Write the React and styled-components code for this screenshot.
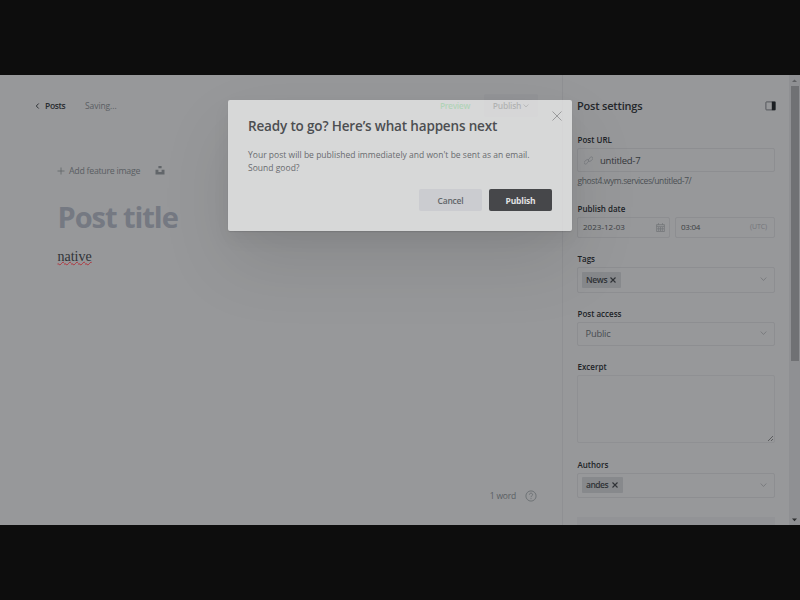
import React from "react";
import styled, { createGlobalStyle } from "styled-components";

const Global = createGlobalStyle`
  * { box-sizing: border-box; }
  body { margin: 0; background: #0d0d0d; }
`;

const Stage = styled.div`
  width: 800px;
  height: 600px;
  padding: 75px 0;
  background: #0d0d0d;
  font-family: "Open Sans", "Noto Sans", sans-serif;
  overflow: hidden;
`;

const AppFrame = styled.div`
  position: relative;
  display: grid;
  grid-template-columns: 562px 227px 11px;
  height: 450px;
  background: #97989a;
  overflow: hidden;
`;

const Label = styled.span`
  font-size: ${(p) => p.$size || 9}px;
  font-weight: ${(p) => p.$weight || 400};
  letter-spacing: ${(p) => p.$track || 0}px;
  color: ${(p) => p.$color || "#5a5e63"};
  line-height: 14px;
  white-space: nowrap;
`;

const Editor = styled.main`
  display: flex;
  flex-direction: column;
`;

const TopBar = styled.header`
  display: flex;
  align-items: center;
  height: 61px;
  padding: 0 24px 0 35px;
`;

const BackLink = styled.div`
  display: flex;
  align-items: center;
  gap: 5px;
  width: 50px;
`;

const TopActions = styled.div`
  display: flex;
  align-items: center;
  gap: 14px;
  margin-left: auto;
`;

const PublishMenu = styled.div`
  display: flex;
  align-items: center;
  justify-content: center;
  gap: 2px;
  width: 54px;
  height: 23px;
  border-radius: 2px;
  background: #939497;
`;

const FeatureRow = styled.div`
  display: flex;
  align-items: center;
  height: 16px;
  margin: 26.5px 0 0 57px;
`;

const FeatureText = styled.div`
  width: 86px;
  margin-left: 4px;
  display: flex;
`;

const PostTitle = styled.h1`
  margin: 18.5px 0 0 57.5px;
  font-size: 29px;
  line-height: 40px;
  font-weight: 700;
  letter-spacing: -1.05px;
  color: #757982;
`;

const Body = styled.p`
  margin: 11px 0 0 57.5px;
  font-family: "Liberation Serif", serif;
  font-size: 14px;
  line-height: 18px;
  color: #303337;
`;

const Misspelled = styled.span`
  text-decoration: underline wavy #b0343c 1px;
  text-underline-offset: 0;
  text-decoration-skip-ink: none;
`;

const StatusBar = styled.footer`
  display: flex;
  align-items: center;
  justify-content: flex-end;
  gap: 9px;
  margin-top: auto;
  height: 16px;
  margin-bottom: 21px;
  padding-right: 25px;
`;

const Sidebar = styled.aside`
  display: flex;
  flex-direction: column;
  padding: 0 15px 0 14px;
  border-left: 1px solid #8f9093;
`;

const SideHeader = styled.div`
  display: flex;
  align-items: center;
  justify-content: space-between;
  width: 199px;
  height: 61px;
  margin-bottom: -3px;
`;

const Field = styled.section`
  display: flex;
  flex-direction: column;
  width: 198px;
  height: ${(p) => p.$height}px;
`;

const FieldLabel = styled.label`
  height: 14px;
  margin-bottom: 1px;
  padding-left: 0.5px;
  font-size: 8px;
  font-weight: 600;
  line-height: 14px;
  color: #202327;
`;

const Box = styled.div`
  display: flex;
  align-items: center;
  width: ${(p) => (p.$width ? `${p.$width}px` : "auto")};
  flex: none;
  height: ${(p) => p.$height}px;
  padding: 0 ${(p) => p.$right || 7}px 0 ${(p) => p.$left || 5}px;
  border: 1px solid #8d8e91;
  border-radius: 2px;
`;

const UrlText = styled.span`
  padding: 1px 0 0 7px;
  font-size: 9.5px;
  line-height: 14px;
  letter-spacing: -0.25px;
  color: #34373b;
`;

const UrlHint = styled.span`
  margin-top: 2px;
  padding-left: 0.5px;
  font-size: 8.5px;
  line-height: 14px;
  letter-spacing: -0.4px;
  white-space: nowrap;
  color: #4c5054;
`;

const DateRow = styled.div`
  display: flex;
  gap: 5px;
`;

const Push = styled.div`
  display: flex;
  margin-left: auto;
`;

const Token = styled.div`
  display: flex;
  align-items: center;
  gap: ${(p) => p.$gap}px;
  width: ${(p) => p.$width}px;
  height: 16px;
  padding-left: 4px;
  border-radius: 1px;
  background: #87898c;
`;

const TextArea = styled.div`
  display: flex;
  align-items: flex-end;
  justify-content: flex-end;
  height: 68px;
  border: 1px solid #8f9093;
  border-radius: 2px;
`;

const LowerPanel = styled.div`
  width: 198px;
  height: 8px;
  background: #929396;
`;

const ScrollTrack = styled.div`
  display: flex;
  flex-direction: column;
  align-items: center;
  background: #8f9093;
`;

const Thumb = styled.div`
  width: 8px;
  height: 275px;
  background: #707174;
`;

const ArrowBox = styled.div`
  display: flex;
  align-items: center;
  justify-content: center;
  height: 11px;
  margin-top: ${(p) => (p.$bottom ? "auto" : 0)};
`;

const Dialog = styled.div`
  position: absolute;
  left: 228px;
  top: 25px;
  width: 344px;
  height: 131px;
  padding: 17px 20px 20px;
  display: flex;
  flex-direction: column;
  border-radius: 2px;
  background: rgba(246, 246, 246, 0.68);
  box-shadow: 0 1px 1px rgba(0, 0, 0, 0.1), 0 8px 18px rgba(0, 0, 0, 0.05),
    0 32px 70px rgba(0, 0, 0, 0.1);
`;

const DialogTitle = styled.h2`
  margin: 0;
  font-size: 13.5px;
  line-height: 18px;
  font-weight: 600;
  letter-spacing: -0.16px;
  color: #4c4e51;
  white-space: nowrap;
`;

const DialogText = styled.p`
  margin: 13px 0 0;
  font-size: 8.5px;
  line-height: 13px;
  letter-spacing: 0.02px;
  color: #696b6f;
  white-space: nowrap;
`;

const DialogActions = styled.div`
  display: flex;
  justify-content: flex-end;
  gap: 7px;
  margin-top: auto;
`;

const DialogButton = styled.button`
  width: 63px;
  height: 22px;
  padding: 1px 0 0;
  border: 0;
  border-radius: 2px;
  font: ${(p) => (p.$primary ? 700 : 600)} 8.5px/21px "Open Sans", sans-serif;
  letter-spacing: -0.2px;
  color: ${(p) => (p.$primary ? "#e2e2e3" : "#626568")};
  background: ${(p) => (p.$primary ? "#46474a" : "#cbccd0")};
`;

const CloseSlot = styled.div`
  position: absolute;
  top: 11px;
  right: 10px;
  display: flex;
`;

const Chevron = ({ w = 7, color = "#77797d" }) => (
  <svg width={w} height={w * 0.6} viewBox="0 0 10 6" fill="none" stroke={color} strokeWidth="1.3">
    <path d="M1 .8 5 5 9 .8" />
  </svg>
);

const Cross = ({ size = 6, color = "#303337", sw = 1.1 }) => (
  <svg width={size} height={size} viewBox={`0 0 ${size} ${size}`} stroke={color} strokeWidth={sw}>
    <path d={`M.5 .5 ${size - 0.5} ${size - 0.5}M${size - 0.5} .5 .5 ${size - 0.5}`} />
  </svg>
);

export default function App() {
  return (
    <Stage>
      <Global />
      <AppFrame>
        <Editor>
          <TopBar>
            <BackLink>
              <svg width="5" height="6" viewBox="0 0 5 6" fill="none" stroke="#303337" strokeWidth="1">
                <path d="M3.7 .5 1.3 3 3.7 5.5" />
              </svg>
              <Label $size={8.5} $weight={600} $track={-0.35} $color="#292c30">Posts</Label>
            </BackLink>
            <Label $size={8.5} $track={-0.08}>Saving...</Label>
            <TopActions>
              <Label $size={8.5} $weight={600} $track={-0.35} $color="#1c8a34">Preview</Label>
              <PublishMenu>
                <Label $size={8.5} $weight={600} $track={-0.25} $color="#1c1f23">Publish</Label>
                <Chevron w={6} color="#1c1f23" />
              </PublishMenu>
            </TopActions>
          </TopBar>
          <FeatureRow>
            <svg width="8" height="8" viewBox="0 0 8 8" stroke="#606468" strokeWidth="0.8">
              <path d="M4 .5V7.5M.5 4H7.5" />
            </svg>
            <FeatureText>
              <Label $size={8.8} $track={-0.27}>Add feature image</Label>
            </FeatureText>
            <svg width="10" height="9" viewBox="0 0 10 9" fill="#62666a">
              <path d="M3.4 0h3.2v2.2H3.4zM.5 3.8h2.9v2.3h3.2V3.8h2.9v4.7H.5z" />
            </svg>
          </FeatureRow>
          <PostTitle>Post title</PostTitle>
          <Body><Misspelled>native</Misspelled></Body>
          <StatusBar>
            <Label $size={8.5} $track={-0.2}>1 word</Label>
            <svg width="12" height="12" viewBox="0 0 12 12" fill="none" stroke="#65696d" strokeWidth="0.8">
              <circle cx="6" cy="6" r="5.1" />
              <path d="M4.4 4.7c0-2.1 3.2-2.1 3.2 0C7.6 5.8 6 5.8 6 7.2M6 8.2v.9" />
            </svg>
          </StatusBar>
        </Editor>
        <Sidebar>
          <SideHeader>
            <Label $size={11} $weight={600} $track={-0.2} $color="#24272b">Post settings</Label>
            <svg width="11" height="10" viewBox="0 0 11 10">
              <rect x=".9" y=".9" width="9.2" height="8" rx=".6" fill="none" stroke="#45484c" strokeWidth=".8" />
              <path d="M6.8 .6H10.5V9.2H6.8z" fill="#1b1e22" />
            </svg>
          </SideHeader>
          <Field $height={68.5}>
            <FieldLabel>Post URL</FieldLabel>
            <Box $height={24} $left={6}>
              <svg width="9" height="9" viewBox="0 0 9 9" fill="none" stroke="#797b7f" strokeWidth=".8">
                <rect x="-.2" y="4.4" width="5.2" height="2.8" rx="1.4" transform="rotate(-45 2.4 5.8)" />
                <rect x="4" y="1.8" width="5.2" height="2.8" rx="1.4" transform="rotate(-45 6.6 3.2)" />
              </svg>
              <UrlText>untitled-7</UrlText>
            </Box>
            <UrlHint>ghost4.wym.services/untitled-7/</UrlHint>
          </Field>
          <Field $height={50}>
            <FieldLabel>Publish date</FieldLabel>
            <DateRow>
              <Box $height={21} $width={93} $right={4}>
                <Label $size={8} $track={0.02} $color="#3c3f43">2023-12-03</Label>
                <Push>
                  <svg width="9" height="9" viewBox="0 0 9 9" fill="none" stroke="#74767a" strokeWidth=".8">
                    <path d="M.6 1.6H8.4V8.5H.6zM.6 3.4H8.4M2.5 .2V2M6.5 .2V2M2.7 4V8M4.5 4V8M6.3 4V8M1 5.8H8" />
                  </svg>
                </Push>
              </Box>
              <Box $height={21} $width={100}>
                <Label $size={8} $track={-0.25} $color="#3c3f43">03:04</Label>
                <Push><Label $size={7} $track={-0.1} $color="#74767a">(UTC)</Label></Push>
              </Box>
            </DateRow>
          </Field>
          <Field $height={55}>
            <FieldLabel>Tags</FieldLabel>
            <Box $height={26} $left={4}>
              <Token $width={39} $gap={3}>
                <Label $size={8.5} $weight={600} $track={-0.35} $color="#303337">News</Label>
                <Cross />
              </Token>
              <Push><Chevron /></Push>
            </Box>
          </Field>
          <Field $height={53.5}>
            <FieldLabel>Post access</FieldLabel>
            <Box $height={24} $left={7.5}>
              <Label $size={9.3} $track={-0.2} $color="#484c50">Public</Label>
              <Push><Chevron /></Push>
            </Box>
          </Field>
          <Field $height={97.5}>
            <FieldLabel>Excerpt</FieldLabel>
            <TextArea>
              <svg width="7" height="7" viewBox="0 0 7 7" stroke="#4c4e51" strokeWidth=".8">
                <path d="M1 6 6 1M4 6 6 4" />
              </svg>
            </TextArea>
          </Field>
          <Field $height={59.5}>
            <FieldLabel>Authors</FieldLabel>
            <Box $height={25} $left={4}>
              <Token $width={41} $gap={4}>
                <Label $size={8.5} $weight={600} $track={-0.5} $color="#303337">andes</Label>
                <Cross />
              </Token>
              <Push><Chevron /></Push>
            </Box>
          </Field>
          <LowerPanel />
        </Sidebar>
        <ScrollTrack>
          <ArrowBox>
            <svg width="5" height="4" viewBox="0 0 5 4" fill="#606164"><path d="M0 3 2.5 .5 5 3z" /></svg>
          </ArrowBox>
          <Thumb />
          <ArrowBox $bottom>
            <svg width="5" height="4" viewBox="0 0 5 4" fill="#2d2e30"><path d="M0 .5H5L2.5 3.2z" /></svg>
          </ArrowBox>
        </ScrollTrack>
        <Dialog>
          <DialogTitle>Ready to go? Here’s what happens next</DialogTitle>
          <DialogText>
            Your post will be published immediately and won't be sent as an email.
            <br />
            Sound good?
          </DialogText>
          <DialogActions>
            <DialogButton>Cancel</DialogButton>
            <DialogButton $primary>Publish</DialogButton>
          </DialogActions>
          <CloseSlot><Cross size={10} sw={0.8} color="#8a8b8d" /></CloseSlot>
        </Dialog>
      </AppFrame>
    </Stage>
  );
}
